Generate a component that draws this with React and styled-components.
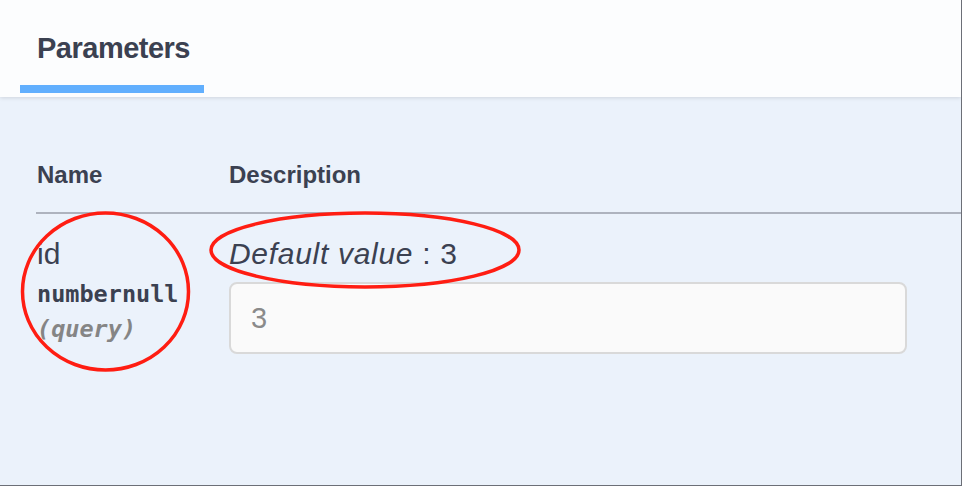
import React from 'react'
import styled, { createGlobalStyle } from 'styled-components'

const GlobalStyle = createGlobalStyle`
  html, body {
    margin: 0;
    padding: 0;
  }
  body {
    background: #ebf2fb;
    font-family: 'Liberation Sans', Arial, sans-serif;
    color: #3b4151;
  }
`

const Frame = styled.div`
  position: relative;
  width: 962px;
  height: 486px;
  box-sizing: border-box;
  border-right: 1px solid #6c6f77;
  border-bottom: 1px solid #6c6f77;
  background: #ebf2fb;
  overflow: hidden;
`

const SectionHeader = styled.div`
  position: relative;
  z-index: 1;
  display: flex;
  align-items: flex-end;
  height: 97px;
  box-sizing: border-box;
  padding: 0 0 4px 20px;
  background: #fcfdfe;
  box-shadow: 0 1px 4px rgba(0, 0, 0, 0.12);
`

const Tab = styled.div`
  width: 184px;
  box-sizing: border-box;
  padding: 34px 0 22px 17px;
  border-bottom: 8px solid #61affe;
`

const TabTitle = styled.h4`
  margin: 0;
  font-size: 29px;
  line-height: 29px;
  font-weight: 700;
  letter-spacing: -0.5px;
  color: #3b4151;
`

const ParamTable = styled.div`
  margin-left: 36px;
  padding-top: 66px;
`

const HeadRow = styled.div`
  display: grid;
  grid-template-columns: 193px 1fr;
  padding-bottom: 25px;
  border-bottom: 2px solid #aeb3be;
`

const HeadCell = styled.div`
  padding-left: ${p => (p.$first ? '1px' : '0')};
  font-size: 24px;
  line-height: 24px;
  font-weight: 700;
  color: #3b4151;
`

const Row = styled.div`
  display: grid;
  grid-template-columns: 193px 1fr;
  padding-top: 25px;
`

const NameCell = styled.div`
  display: flex;
  flex-direction: column;
  padding-left: 1px;
`

const ParamName = styled.div`
  font-size: 30px;
  line-height: 30px;
  color: #3b4151;
`

const Mono = styled.div`
  margin-top: ${p => p.$gap}px;
  font-family: 'DejaVu Sans Mono', 'Liberation Mono', monospace;
  font-size: 23.5px;
  line-height: 23.5px;
  font-weight: 700;
  font-style: ${p => (p.$italic ? 'italic' : 'normal')};
  color: ${p => (p.$muted ? '#858585' : '#3b4151')};
`

const DescCell = styled.div`
  display: flex;
  flex-direction: column;
`

const DefaultValue = styled.p`
  margin: 0;
  font-size: 30px;
  line-height: 30px;
  letter-spacing: 0.7px;
  color: #3b4151;

  i {
    font-style: italic;
  }
`

const ValueInput = styled.input`
  margin-top: 13px;
  width: 678px;
  height: 72px;
  box-sizing: border-box;
  padding: 0 20px;
  border: 2px solid #d9d9d9;
  border-radius: 8px;
  background: #fafafa;
  font-family: 'Liberation Sans', Arial, sans-serif;
  font-size: 29px;
  color: #8a8a8a;
  outline: none;
`

const Annotations = styled.svg`
  position: absolute;
  left: 0;
  top: 0;
  z-index: 2;
  pointer-events: none;
`

export default function App() {
  return (
    <>
      <GlobalStyle />
      <Frame>
        <SectionHeader>
          <Tab>
            <TabTitle>Parameters</TabTitle>
          </Tab>
        </SectionHeader>
        <ParamTable>
          <HeadRow>
            <HeadCell $first>Name</HeadCell>
            <HeadCell>Description</HeadCell>
          </HeadRow>
          <Row>
            <NameCell>
              <ParamName>id</ParamName>
              <Mono $gap={14}>numbernull</Mono>
              <Mono $gap={11} $italic $muted>(query)</Mono>
            </NameCell>
            <DescCell>
              <DefaultValue>
                <i>Default value</i> : 3
              </DefaultValue>
              <ValueInput type="text" defaultValue="3" />
            </DescCell>
          </Row>
        </ParamTable>
        <Annotations width="962" height="486" viewBox="0 0 962 486">
          <ellipse cx="105.5" cy="291.5" rx="83" ry="78.5" fill="none" stroke="#ff1d12" strokeWidth="3.5" />
          <ellipse cx="365" cy="250" rx="154" ry="37" fill="none" stroke="#ff1d12" strokeWidth="3.5" />
        </Annotations>
      </Frame>
    </>
  )
}
